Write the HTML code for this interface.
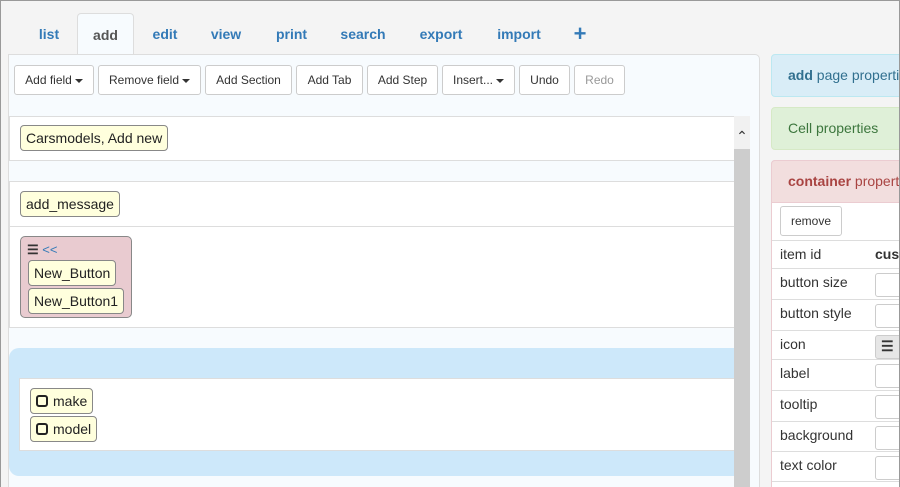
<!DOCTYPE html>
<html style="overflow:hidden;height:487px"><head><style>
*{box-sizing:border-box;margin:0;padding:0}
html,body{width:900px;height:487px;overflow:hidden}
body{background:#f4f4f4;font-family:"Liberation Sans",sans-serif;font-size:13px;color:#333;position:relative}
.frame{position:absolute;left:0;top:0;width:900px;height:487px;border:1px solid #999;border-bottom:none;pointer-events:none;z-index:9}
.tab{position:absolute;top:13px;height:42px;line-height:42px;font-weight:bold;font-size:14px;color:#337ab7;text-align:center}
.tab.act{background:#f7fbfe;border:1px solid #ddd;border-bottom:none;border-radius:4px 4px 0 0;color:#555;height:42px}
.main{position:absolute;left:8px;top:54px;width:752px;height:440px;background:#f7fbfe;border:1px solid #ddd;border-radius:0 5px 0 0}
.btn{position:absolute;top:65px;height:30px;line-height:28px;border:1px solid #ccc;border-radius:3px;background:#fff;font-size:12px;text-align:center;color:#333;white-space:nowrap}
.caret{display:inline-block;border-top:4px solid #333;border-left:4px solid transparent;border-right:4px solid transparent;vertical-align:middle;margin-left:3px}
.sec{position:absolute;left:9px;width:726px;background:#fff;border:1px solid #ddd}
.chip{position:absolute;background:#ffffdd;border:1px solid #888;border-radius:4px;height:26px;line-height:24px;padding:0 5px;font-size:14px;color:#222;white-space:nowrap}
.sq{display:inline-block;width:12px;height:12px;border:2.5px solid #222;border-radius:3px;vertical-align:-1px;margin-right:5px}
.panel{position:absolute;left:771px;width:140px;border-radius:4px;font-size:14px;padding-left:16px;white-space:nowrap;overflow:hidden}
.row{position:absolute;left:772px;width:130px;border-top:1px solid #ddd;font-size:14px;color:#333;padding-left:8px;background:#fff;white-space:nowrap}
.inp{position:absolute;left:103px;width:40px;height:24px;border:1px solid #ccc;border-radius:3px}
</style></head><body>
<div class="tab" style="left:25px;width:48px">list</div>
<div class="tab act" style="left:77px;width:57px">add</div>
<div class="tab" style="left:139px;width:52px">edit</div>
<div class="tab" style="left:200px;width:52px">view</div>
<div class="tab" style="left:264px;width:55px">print</div>
<div class="tab" style="left:328px;width:70px">search</div>
<div class="tab" style="left:406px;width:70px">export</div>
<div class="tab" style="left:486px;width:66px">import</div>
<div class="tab" style="left:566px;width:28px;font-size:22px">+</div>
<div class="main"></div>
<div class="btn" style="left:14px;width:80px">Add field<span class="caret"></span></div>
<div class="btn" style="left:98px;width:103px">Remove field<span class="caret"></span></div>
<div class="btn" style="left:205px;width:87px">Add Section</div>
<div class="btn" style="left:296px;width:67px">Add Tab</div>
<div class="btn" style="left:367px;width:71px">Add Step</div>
<div class="btn" style="left:442px;width:73px">Insert...<span class="caret"></span></div>
<div class="btn" style="left:519px;width:51px">Undo</div>
<div class="btn" style="left:574px;width:51px;color:#999">Redo</div>
<div class="sec" style="top:116px;height:45px"></div>
<div class="chip" style="left:20px;top:125px">Carsmodels, Add new</div>
<div class="sec" style="top:181px;height:147px"></div>
<div style="position:absolute;left:10px;top:226px;width:724px;height:1px;background:#ddd"></div>
<div class="chip" style="left:20px;top:191px">add_message</div>
<div style="position:absolute;left:20px;top:236px;width:112px;height:82px;background:#e9cbd0;border:1px solid #888;border-radius:5px"></div>
<div style="position:absolute;left:27px;top:242px;font-size:13px;font-weight:bold">&#9776; <span style="color:#337ab7;font-weight:normal">&lt;&lt;</span></div>
<div class="chip" style="left:28px;top:260px">New_Button</div>
<div class="chip" style="left:28px;top:288px">New_Button1</div>
<div style="position:absolute;left:9px;top:348px;width:740px;height:128px;background:#cde8fa;border-radius:10px"></div>
<div style="position:absolute;left:19px;top:378px;width:716px;height:73px;background:#fff;border:1px solid #ddd"></div>
<div class="chip" style="left:30px;top:388px"><span class="sq"></span>make</div>
<div class="chip" style="left:30px;top:416px"><span class="sq"></span>model</div>
<div style="position:absolute;left:734px;top:116px;width:16px;height:371px;background:#cdcdcd"></div>
<div style="position:absolute;left:734px;top:116px;width:16px;height:33px;background:#f1f1f1;text-align:center;font-size:14px;line-height:40px;color:#333">&#8963;</div>
<div class="panel" style="top:54px;height:43px;line-height:41px;background:#d9edf7;border:1px solid #bce8f1;color:#31708f"><b>add</b> page properties</div>
<div class="panel" style="top:107px;height:43px;line-height:41px;background:#dff0d8;border:1px solid #d6e9c6;color:#3c763d">Cell properties</div>
<div class="panel" style="top:160px;height:340px;background:#fff;border:1px solid #ebccd1;padding:0"></div>
<div class="panel" style="top:160px;height:43px;line-height:41px;background:#f2dede;border:1px solid #ebccd1;color:#a94442;border-radius:4px 4px 0 0"><b>container</b> properties</div>
<div class="btn" style="left:780px;top:206px;width:62px;font-size:12px">remove</div>
<div class="row" style="top:240px;height:28px;line-height:27px">item id<b style="position:absolute;left:103px">custom</b></div>
<div class="row" style="top:268px;height:31px;line-height:27px">button size<div class="inp" style="top:4px"></div></div>
<div class="row" style="top:299px;height:31px;line-height:27px">button style<div class="inp" style="top:4px"></div></div>
<div class="row" style="top:330px;height:29px;line-height:27px">icon<div class="inp" style="top:4px;background:#e6e6e6;font-weight:bold;padding-left:5px;line-height:20px">&#9776;</div></div>
<div class="row" style="top:359px;height:31px;line-height:27px">label<div class="inp" style="top:4px"></div></div>
<div class="row" style="top:390px;height:31px;line-height:27px">tooltip<div class="inp" style="top:4px"></div></div>
<div class="row" style="top:421px;height:30px;line-height:27px">background<div class="inp" style="top:4px"></div></div>
<div class="row" style="top:451px;height:30px;line-height:27px">text color<div class="inp" style="top:4px"></div></div>
<div class="row" style="top:481px;height:6px"></div>
<div class="frame"></div>
</body></html>
